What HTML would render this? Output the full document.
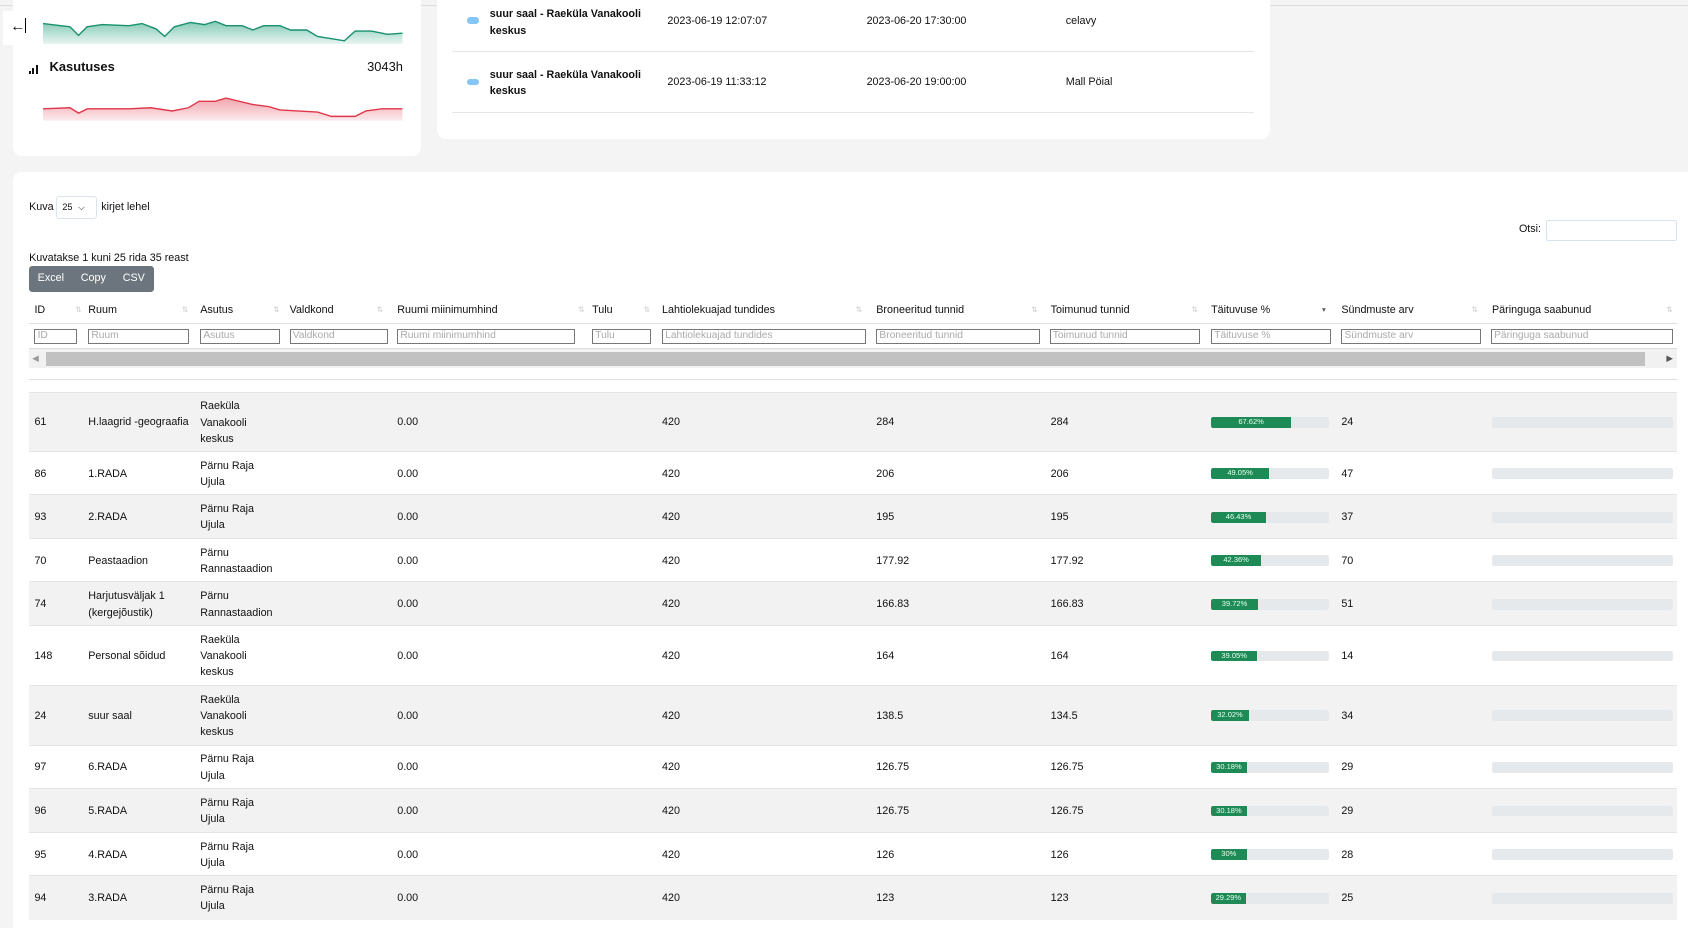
<!DOCTYPE html>
<html><head><meta charset="utf-8"><style>
html,body{margin:0;padding:0;width:1688px;height:928px;overflow:hidden;background:#f4f4f4;}
#w{zoom:1.0765;width:1568px;height:862px;position:relative;font-family:"Liberation Sans",sans-serif;font-size:10px;color:#111;}
.a{position:absolute;}
.card{position:absolute;background:#fff;border-radius:8px;}
.row{position:absolute;left:27px;width:1531px;border-top:1px solid #e4e4e4;}
.row.g{background:#f2f2f2;}
.c{position:absolute;top:50%;transform:translateY(-50%);line-height:15px;}
.pb{position:absolute;top:50%;margin-top:-5px;height:10px;background:#e6e9ec;border-radius:2px;overflow:hidden;}
.pb i{display:block;height:100%;background:#1e8a56;color:#e8fff0;font-style:normal;font-size:7px;line-height:10px;text-align:center;}
.hd{position:absolute;top:282px;}
.f{position:absolute;top:306px;height:14px;border:1px solid #777;box-sizing:border-box;color:#aaa;font-size:9.5px;line-height:12px;padding-left:2px;overflow:hidden;white-space:nowrap;}
.s{position:absolute;top:283px;color:#ccc;font-size:7px;}
</style></head><body><div id="w">
<div class="a" style="left:0;top:5px;width:1568px;height:1px;background:#ddd"></div>
<div class="card" style="left:12px;top:-10px;width:379px;height:155px"></div>
<div class="a" style="left:3px;top:10px;width:28px;height:32px;background:#fff;font-size:14px;line-height:30px;text-align:center;color:#000">←<span style="display:inline-block;width:1px;height:14px;background:#000;vertical-align:-2px"></span></div>
<svg class="a" style="left:40px;top:15px" width="334" height="26" viewBox="0 0 334 26"><defs><linearGradient id="gg" x1="0" y1="0" x2="0" y2="1"><stop offset="0" stop-color="#1f9e7a" stop-opacity=".55"/><stop offset="1" stop-color="#1f9e7a" stop-opacity=".1"/></linearGradient><linearGradient id="rg" x1="0" y1="0" x2="0" y2="1"><stop offset="0" stop-color="#e0384b" stop-opacity=".45"/><stop offset="1" stop-color="#e0384b" stop-opacity=".1"/></linearGradient></defs>
<path d="M0 7 L25 10 L33 18 L41 10 L55 8 L80 9 L92 7 L105 12 L113 19 L122 10 L137 6 L150 8 L160 5 L170 9 L185 9 L195 13 L205 9 L220 9 L230 13 L245 13 L255 19 L280 23 L290 14 L305 14 L320 17 L334 16 L334 26 L0 26Z" fill="url(#gg)"/>
<path d="M0 7 L25 10 L33 18 L41 10 L55 8 L80 9 L92 7 L105 12 L113 19 L122 10 L137 6 L150 8 L160 5 L170 9 L185 9 L195 13 L205 9 L220 9 L230 13 L245 13 L255 19 L280 23 L290 14 L305 14 L320 17 L334 16" fill="none" stroke="#18906e" stroke-width="1.3"/></svg>
<div class="a" style="left:27px;top:60px;width:9px;height:9px"><span style="position:absolute;left:0;bottom:0;width:2px;height:3px;background:#111"></span><span style="position:absolute;left:3px;bottom:0;width:2px;height:6px;background:#111"></span><span style="position:absolute;left:6px;bottom:0;width:2px;height:9px;background:#111"></span></div>
<div class="a" style="left:46px;top:55px;font-size:12px;font-weight:bold">Kasutuses</div>
<div class="a" style="left:341px;top:55px;font-size:12px">3043h</div>
<svg class="a" style="left:40px;top:90px" width="334" height="22" viewBox="0 0 334 22"><path d="M0 11 L25 10 L33 15 L41 11 L80 11 L100 10 L120 13 L135 10 L145 4 L160 4 L170 1 L195 7 L210 9 L220 12 L255 14 L268 18 L290 18 L300 13 L315 11 L334 11 L334 22 L0 22Z" fill="url(#rg)"/><path d="M0 11 L25 10 L33 15 L41 11 L80 11 L100 10 L120 13 L135 10 L145 4 L160 4 L170 1 L195 7 L210 9 L220 12 L255 14 L268 18 L290 18 L300 13 L315 11 L334 11" fill="none" stroke="#e0384b" stroke-width="1.3"/></svg>

<div class="card" style="left:406px;top:-10px;width:774px;height:139px"></div>
<div class="a" style="left:420px;top:47px;width:745px;height:1px;background:#e6e6e6"></div>
<div class="a" style="left:420px;top:104px;width:745px;height:1px;background:#e6e6e6"></div>
<div class="a" style="left:434px;top:16px;width:11px;height:6px;border-radius:3px;background:#86c6f7"></div>
<div class="a" style="left:434px;top:73px;width:11px;height:6px;border-radius:3px;background:#86c6f7"></div>
<div class="a" style="left:455px;top:6px;font-weight:bold;line-height:15px">suur saal - Raeküla Vanakooli<br>keskus</div>
<div class="a" style="left:455px;top:62px;font-weight:bold;line-height:15px">suur saal - Raeküla Vanakooli<br>keskus</div>
<div class="a" style="left:620px;top:14px">2023-06-19 12:07:07</div>
<div class="a" style="left:805px;top:14px">2023-06-20 17:30:00</div>
<div class="a" style="left:990px;top:14px">celavy</div>
<div class="a" style="left:620px;top:71px">2023-06-19 11:33:12</div>
<div class="a" style="left:805px;top:71px">2023-06-20 19:00:00</div>
<div class="a" style="left:990px;top:71px">Mall Pöial</div>

<div class="card" style="left:12px;top:160px;width:1570px;height:720px;border-radius:8px 0 0 0"></div>
<div class="a" style="left:27px;top:187px">Kuva</div>
<div class="a" style="left:52px;top:182px;width:38px;height:21px;border:1px solid #dde3ea;border-radius:3px;box-sizing:border-box;font-size:8.5px;line-height:19px;padding-left:5px">25 <span style="font-size:8px;margin-left:3px">⌵</span></div>
<div class="a" style="left:94px;top:187px">kirjet lehel</div>
<div class="a" style="left:1411px;top:207px">Otsi:</div>
<div class="a" style="left:1436px;top:204px;width:122px;height:20px;border:1px solid #d6e2ee;border-radius:2px;box-sizing:border-box"></div>
<div class="a" style="left:27px;top:234px">Kuvatakse 1 kuni 25 rida 35 reast</div>
<div class="a" style="left:27px;top:247px;width:116px;height:24px;background:#6c757d;border-radius:3px;color:#fff;line-height:24px"><span style="position:absolute;left:8px">Excel</span><span style="position:absolute;left:48px">Copy</span><span style="position:absolute;left:87px">CSV</span></div>

<div class="hd" style="left:32px">ID</div><div class="hd" style="left:82px">Ruum</div><div class="hd" style="left:186px">Asutus</div><div class="hd" style="left:269px">Valdkond</div><div class="hd" style="left:369px">Ruumi miinimumhind</div><div class="hd" style="left:550px">Tulu</div><div class="hd" style="left:615px">Lahtiolekuajad tundides</div><div class="hd" style="left:814px">Broneeritud tunnid</div><div class="hd" style="left:976px">Toimunud tunnid</div><div class="hd" style="left:1125px">Täituvuse %</div><div class="hd" style="left:1246px">Sündmuste arv</div><div class="hd" style="left:1386px">Päringuga saabunud</div>
<div class="s" style="left:70px">⇅</div><div class="s" style="left:169px">⇅</div><div class="s" style="left:254px">⇅</div><div class="s" style="left:350px">⇅</div><div class="s" style="left:537px">⇅</div><div class="s" style="left:598px">⇅</div><div class="s" style="left:795px">⇅</div><div class="s" style="left:958px">⇅</div><div class="s" style="left:1107px">⇅</div><div class="s" style="left:1228px;color:#555">▾</div><div class="s" style="left:1367px">⇅</div><div class="s" style="left:1548px">⇅</div>
<div class="a" style="left:27px;top:300px;width:1531px;height:1px;background:#ddd"></div>
<div class="f" style="left:32px;width:40px">ID</div><div class="f" style="left:82px;width:94px">Ruum</div><div class="f" style="left:186px;width:74px">Asutus</div><div class="f" style="left:269px;width:91px">Valdkond</div><div class="f" style="left:369px;width:165px">Ruumi miinimumhind</div><div class="f" style="left:550px;width:55px">Tulu</div><div class="f" style="left:615px;width:189px">Lahtiolekuajad tundides</div><div class="f" style="left:814px;width:152px">Broneeritud tunnid</div><div class="f" style="left:975px;width:140px">Toimunud tunnid</div><div class="f" style="left:1125px;width:111px">Täituvuse %</div><div class="f" style="left:1246px;width:130px">Sündmuste arv</div><div class="f" style="left:1385px;width:169px">Päringuga saabunud</div>
<div class="a" style="left:27px;top:323px;width:1531px;height:1px;background:#ddd"></div>
<div class="a" style="left:27px;top:324px;width:1531px;height:18px;background:#f1f1f1"></div>
<div class="a" style="left:43px;top:327px;width:1485px;height:13px;background:#c1c1c1"></div>
<div class="a" style="left:30px;top:328px;font-size:8px;color:#999">◀</div>
<div class="a" style="left:1548px;top:328px;font-size:8px;color:#555">▶</div>
<div class="a" style="left:27px;top:352px;width:1531px;height:1px;background:#ddd"></div>

<div class="row g" style="top:364px;height:55px"><div class="c" style="left:5px">61</div><div class="c" style="left:55px">H.laagrid -geograafia</div><div class="c" style="left:159px">Raeküla<br>Vanakooli<br>keskus</div><div class="c" style="left:342px">0.00</div><div class="c" style="left:588px">420</div><div class="c" style="left:787px">284</div><div class="c" style="left:949px">284</div><div class="pb" style="left:1098px;width:110px"><i style="width:67.62%">67.62%</i></div><div class="c" style="left:1219px">24</div><div class="pb" style="left:1359px;width:168px"></div></div>
<div class="row" style="top:419px;height:40px"><div class="c" style="left:5px">86</div><div class="c" style="left:55px">1.RADA</div><div class="c" style="left:159px">Pärnu Raja<br>Ujula</div><div class="c" style="left:342px">0.00</div><div class="c" style="left:588px">420</div><div class="c" style="left:787px">206</div><div class="c" style="left:949px">206</div><div class="pb" style="left:1098px;width:110px"><i style="width:49.05%">49.05%</i></div><div class="c" style="left:1219px">47</div><div class="pb" style="left:1359px;width:168px"></div></div>
<div class="row g" style="top:459px;height:41px"><div class="c" style="left:5px">93</div><div class="c" style="left:55px">2.RADA</div><div class="c" style="left:159px">Pärnu Raja<br>Ujula</div><div class="c" style="left:342px">0.00</div><div class="c" style="left:588px">420</div><div class="c" style="left:787px">195</div><div class="c" style="left:949px">195</div><div class="pb" style="left:1098px;width:110px"><i style="width:46.43%">46.43%</i></div><div class="c" style="left:1219px">37</div><div class="pb" style="left:1359px;width:168px"></div></div>
<div class="row" style="top:500px;height:40px"><div class="c" style="left:5px">70</div><div class="c" style="left:55px">Peastaadion</div><div class="c" style="left:159px">Pärnu<br>Rannastaadion</div><div class="c" style="left:342px">0.00</div><div class="c" style="left:588px">420</div><div class="c" style="left:787px">177.92</div><div class="c" style="left:949px">177.92</div><div class="pb" style="left:1098px;width:110px"><i style="width:42.36%">42.36%</i></div><div class="c" style="left:1219px">70</div><div class="pb" style="left:1359px;width:168px"></div></div>
<div class="row g" style="top:540px;height:41px"><div class="c" style="left:5px">74</div><div class="c" style="left:55px">Harjutusväljak 1<br>(kergejõustik)</div><div class="c" style="left:159px">Pärnu<br>Rannastaadion</div><div class="c" style="left:342px">0.00</div><div class="c" style="left:588px">420</div><div class="c" style="left:787px">166.83</div><div class="c" style="left:949px">166.83</div><div class="pb" style="left:1098px;width:110px"><i style="width:39.72%">39.72%</i></div><div class="c" style="left:1219px">51</div><div class="pb" style="left:1359px;width:168px"></div></div>
<div class="row" style="top:581px;height:55px"><div class="c" style="left:5px">148</div><div class="c" style="left:55px">Personal sõidud</div><div class="c" style="left:159px">Raeküla<br>Vanakooli<br>keskus</div><div class="c" style="left:342px">0.00</div><div class="c" style="left:588px">420</div><div class="c" style="left:787px">164</div><div class="c" style="left:949px">164</div><div class="pb" style="left:1098px;width:110px"><i style="width:39.05%">39.05%</i></div><div class="c" style="left:1219px">14</div><div class="pb" style="left:1359px;width:168px"></div></div>
<div class="row g" style="top:636px;height:56px"><div class="c" style="left:5px">24</div><div class="c" style="left:55px">suur saal</div><div class="c" style="left:159px">Raeküla<br>Vanakooli<br>keskus</div><div class="c" style="left:342px">0.00</div><div class="c" style="left:588px">420</div><div class="c" style="left:787px">138.5</div><div class="c" style="left:949px">134.5</div><div class="pb" style="left:1098px;width:110px"><i style="width:32.02%">32.02%</i></div><div class="c" style="left:1219px">34</div><div class="pb" style="left:1359px;width:168px"></div></div>
<div class="row" style="top:692px;height:40px"><div class="c" style="left:5px">97</div><div class="c" style="left:55px">6.RADA</div><div class="c" style="left:159px">Pärnu Raja<br>Ujula</div><div class="c" style="left:342px">0.00</div><div class="c" style="left:588px">420</div><div class="c" style="left:787px">126.75</div><div class="c" style="left:949px">126.75</div><div class="pb" style="left:1098px;width:110px"><i style="width:30.18%">30.18%</i></div><div class="c" style="left:1219px">29</div><div class="pb" style="left:1359px;width:168px"></div></div>
<div class="row g" style="top:732px;height:41px"><div class="c" style="left:5px">96</div><div class="c" style="left:55px">5.RADA</div><div class="c" style="left:159px">Pärnu Raja<br>Ujula</div><div class="c" style="left:342px">0.00</div><div class="c" style="left:588px">420</div><div class="c" style="left:787px">126.75</div><div class="c" style="left:949px">126.75</div><div class="pb" style="left:1098px;width:110px"><i style="width:30.18%">30.18%</i></div><div class="c" style="left:1219px">29</div><div class="pb" style="left:1359px;width:168px"></div></div>
<div class="row" style="top:773px;height:40px"><div class="c" style="left:5px">95</div><div class="c" style="left:55px">4.RADA</div><div class="c" style="left:159px">Pärnu Raja<br>Ujula</div><div class="c" style="left:342px">0.00</div><div class="c" style="left:588px">420</div><div class="c" style="left:787px">126</div><div class="c" style="left:949px">126</div><div class="pb" style="left:1098px;width:110px"><i style="width:30%">30%</i></div><div class="c" style="left:1219px">28</div><div class="pb" style="left:1359px;width:168px"></div></div>
<div class="row g" style="top:813px;height:41px"><div class="c" style="left:5px">94</div><div class="c" style="left:55px">3.RADA</div><div class="c" style="left:159px">Pärnu Raja<br>Ujula</div><div class="c" style="left:342px">0.00</div><div class="c" style="left:588px">420</div><div class="c" style="left:787px">123</div><div class="c" style="left:949px">123</div><div class="pb" style="left:1098px;width:110px"><i style="width:29.29%">29.29%</i></div><div class="c" style="left:1219px">25</div><div class="pb" style="left:1359px;width:168px"></div></div>
</div></body></html>
